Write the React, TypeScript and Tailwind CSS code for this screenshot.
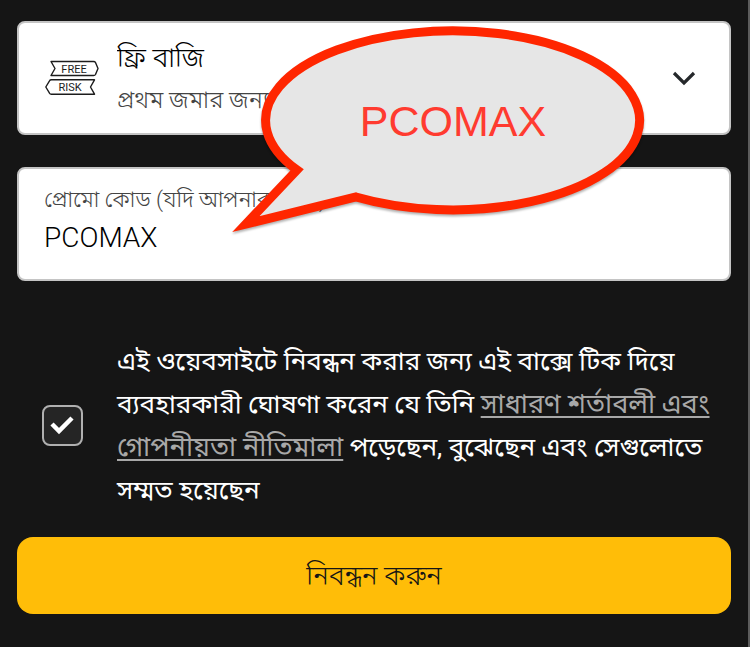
import { useState } from 'react';

function FreeRiskIcon() {
  return (
    <svg className="w-14 h-10 flex-shrink-0" viewBox="0 0 56 40" aria-hidden="true">
      <g fill="none" stroke="#1c1c1c" strokeWidth="1.4" strokeLinejoin="round">
        <path d="M7 3.500h42.500q1.500 0 2 1l2.500 6l-2.500 6q-.5 1-2 1H7l4-7z" />
        <path d="M50.500 21.800H7.500q-1.500 0-2 1L1.800 29l3.700 6.200q.5 1 2 1h43l-4-7.200z" />
      </g>
      <g fill="#1c1c1c" fontFamily="Roboto, sans-serif" fontSize="11" textAnchor="middle">
        <text x="30" y="14.500">FREE</text>
        <text x="26" y="33">RISK</text>
      </g>
    </svg>
  );
}

function Bubble() {
  return (
    <div className="absolute -top-[1px] left-[210px] w-[430px] h-[220px] pointer-events-none">
      <svg className="w-full h-full drop-shadow-[0_2px_1px_rgba(0,0,0,0.3)]" viewBox="0 0 430 220" aria-hidden="true">
        <path
          d="M70 150A187 89.500 0 1 1 129 177L19 204z"
          fill="#e6e6e6"
          stroke="#ff2600"
          strokeWidth="9"
          strokeMiterlimit="10"
        />
      </svg>
      <p className="absolute top-[76px] left-[39px] w-[374px] text-center text-[43px] leading-[50px] text-[#ff3b30] font-['Liberation_Sans',sans-serif]">
        PCOMAX
      </p>
    </div>
  );
}

export default function App() {
  const [code, setCode] = useState('PCOMAX');
  const [accepted, setAccepted] = useState(true);

  return (
    <form
      onSubmit={(e) => e.preventDefault()}
      className="min-h-screen bg-[#151515] border-r-2 border-[#5c5c5c] px-[17px] pt-[21px] pb-8 font-[Roboto,'Noto_Sans_Bengali','Noto_Sans',sans-serif]"
    >
      <div className="relative flex flex-col gap-8">
        <div className="flex items-center h-[114px] rounded-lg border-2 border-[#c4c4c4] bg-white pl-[25px] pr-[33px]">
          <FreeRiskIcon />
          <div className="flex-1 min-w-0 ml-[17px] pt-[2px]">
            <select
              aria-label="বোনাস"
              className="block w-full appearance-none bg-transparent text-[27px] leading-[42px] font-light text-black outline-none"
            >
              <option>ফ্রি বাজি</option>
            </select>
            <p className="text-[24px] leading-[42px] font-light text-[#444]">প্রথম জমার জন্য</p>
          </div>
          <svg className="w-6 h-6 flex-shrink-0" viewBox="0 0 24 24" aria-hidden="true">
            <path d="M2 7l10 10l10-10" fill="none" stroke="#25282b" strokeWidth="3.200" />
          </svg>
        </div>

        <div className="h-[114px] rounded-lg border-2 border-[#c4c4c4] bg-white px-[25px] pt-3">
          <label htmlFor="promo" className="block text-[22px] leading-[38px] font-light text-[#444]">
            প্রোমো কোড (যদি আপনার থাকে)
          </label>
          <input
            id="promo"
            value={code}
            onChange={(e) => setCode(e.target.value)}
            className="block w-full bg-transparent text-[28px] leading-[38px] font-light text-black outline-none"
          />
        </div>

        <Bubble />
      </div>

      <div className="flex items-center gap-[35px] mt-[57px] pl-[25px]">
        <input
          id="terms"
          type="checkbox"
          checked={accepted}
          onChange={(e) => setAccepted(e.target.checked)}
          className="peer appearance-none w-[41px] h-[41px] flex-shrink-0 rounded-lg border-2 border-[#b0b0b0] bg-[#252525]"
        />
        <svg className="hidden peer-checked:block w-6 h-5 -ml-[68px] mr-2 flex-shrink-0 pointer-events-none" viewBox="0 0 24 20" aria-hidden="true">
          <path d="M2 9l7 7L22 3" fill="none" stroke="#fff" strokeWidth="4.500" />
        </svg>
        <label htmlFor="terms" className="pt-[2px] text-[26px] leading-[43px] text-white">
          এই ওয়েবসাইটে নিবন্ধন করার জন্য এই বাক্সে টিক দিয়ে ব্যবহারকারী ঘোষণা করেন যে তিনি{' '}
          <a
            href="#terms"
            className="text-[27px] text-[#a8a8a8] underline underline-offset-[3px] decoration-2 [text-decoration-skip-ink:none]"
          >
            সাধারণ শর্তাবলী এবং গোপনীয়তা নীতিমালা
          </a>{' '}
          পড়েছেন, বুঝেছেন এবং সেগুলোতে সম্মত হয়েছেন
        </label>
      </div>

      <button
        type="submit"
        className="w-full h-[77px] mt-[25px] pt-[2px] rounded-2xl bg-[#ffbd08] text-[27px] font-light text-[#151515]"
      >
        নিবন্ধন করুন
      </button>
    </form>
  );
}
